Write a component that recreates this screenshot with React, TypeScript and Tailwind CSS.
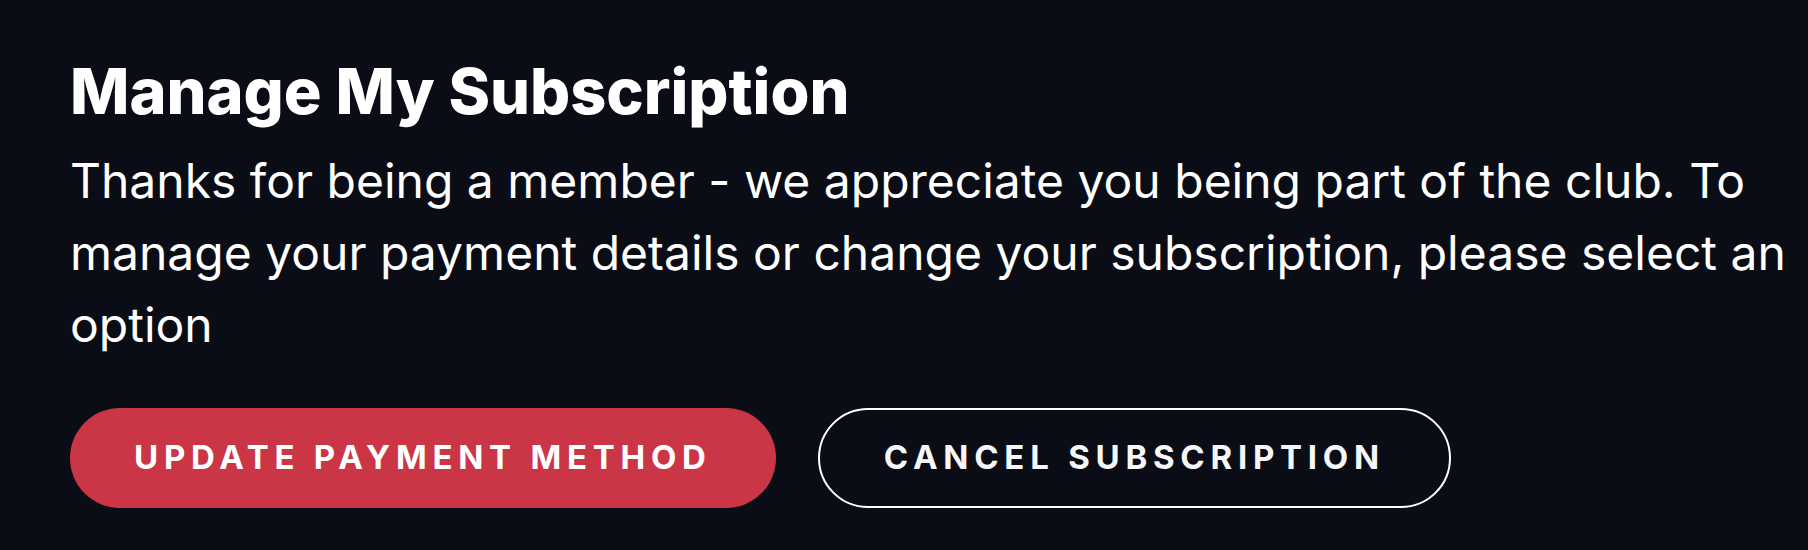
export default function App() {
  return (
    <div className="min-h-[550px] w-full bg-[#0b0d16] pt-[55px] pl-[70px] pr-[8px] pb-[43px] font-['Inter','Noto_Sans',sans-serif] text-white">
      <h1 className="text-[63px] font-extrabold leading-[72px]">Manage My Subscription</h1>
      <p className="mt-[18px] text-[48px] leading-[72px]">
        Thanks for being a member - we appreciate you being part of the club. To manage your payment details or change
        your subscription, please select an option
      </p>

      <div className="mt-[47px] flex items-center gap-[42px]">
        <button className="h-[100px] rounded-full bg-[#cb3646] px-[64px] text-[33px] font-bold uppercase tracking-[5.75px] text-white">
          Update Payment Method
        </button>
        <button className="h-[100px] rounded-full border-2 border-white px-[64px] text-[33px] font-bold uppercase tracking-[5.75px] text-[#f6f7f9]">
          Cancel Subscription
        </button>
      </div>
    </div>
  )
}
